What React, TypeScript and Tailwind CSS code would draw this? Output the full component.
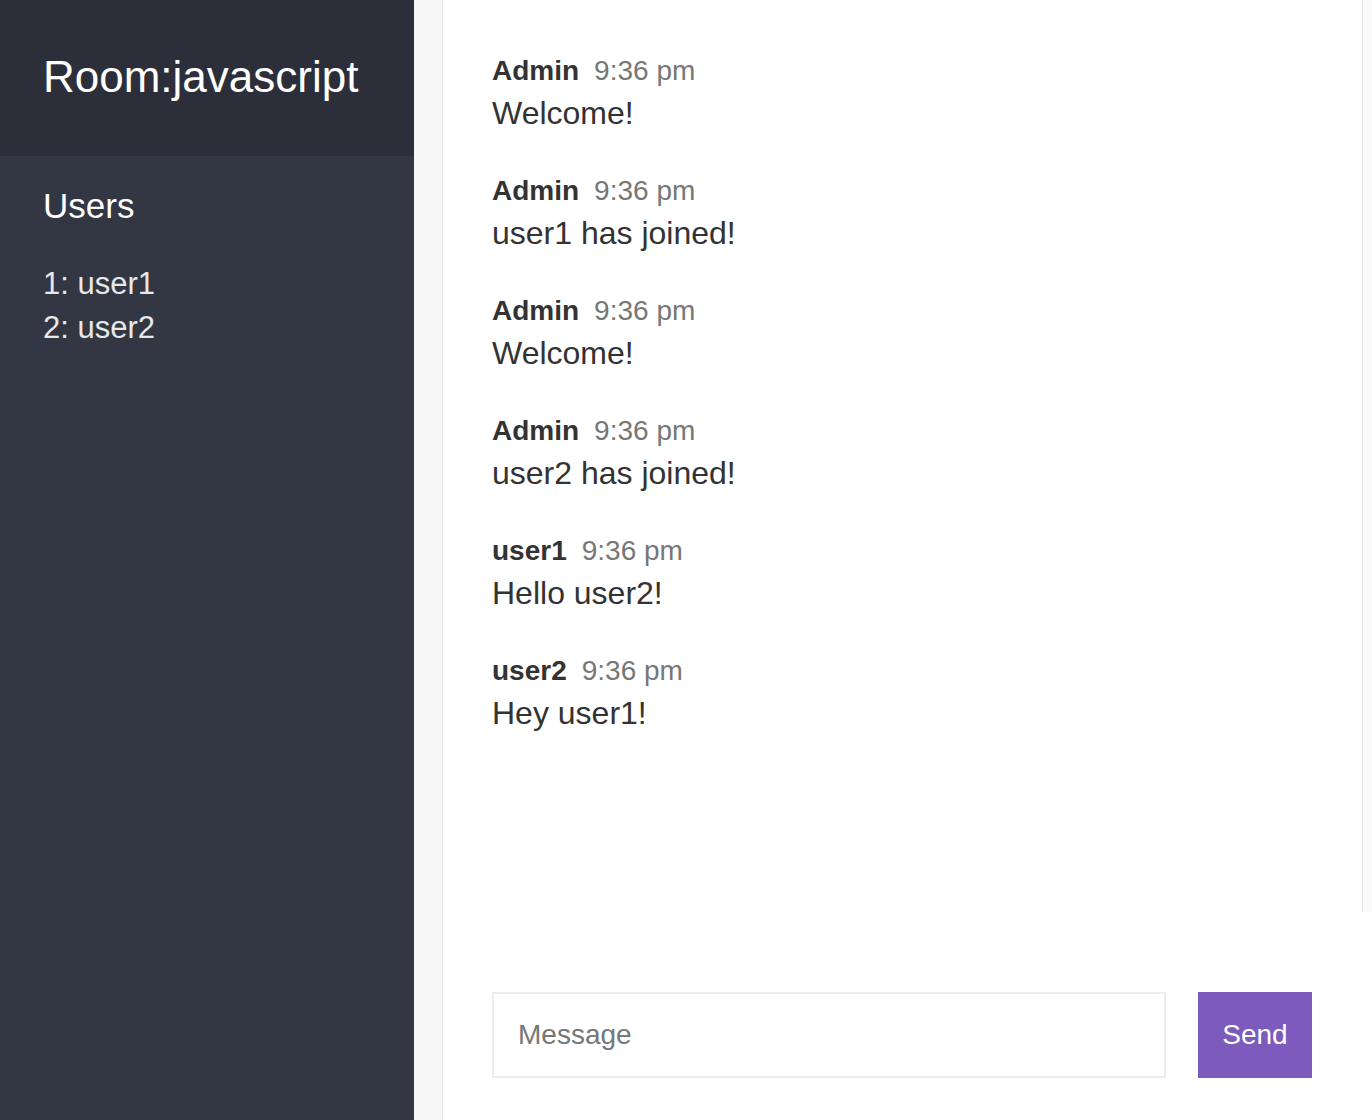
import React from "react";

const users = ["user1", "user2"];

const messages = [
  { from: "Admin", at: "9:36 pm", text: "Welcome!" },
  { from: "Admin", at: "9:36 pm", text: "user1 has joined!" },
  { from: "Admin", at: "9:36 pm", text: "Welcome!" },
  { from: "Admin", at: "9:36 pm", text: "user2 has joined!" },
  { from: "user1", at: "9:36 pm", text: "Hello user2!" },
  { from: "user2", at: "9:36 pm", text: "Hey user1!" },
];

const App = () => {
  return (
    <div className="flex h-[1120px] w-full overflow-hidden bg-white font-['Liberation_Sans',Arial,sans-serif]">
      <aside className="flex w-[414px] shrink-0 flex-col bg-[#333744]">
        <div className="h-[156px] bg-[#2c2f3a] px-[43px] pt-[51px]">
          <h1 className="text-[44px] leading-[1.2] text-white">Room:javascript</h1>
        </div>
        <div className="px-[43px] pt-[29px]">
          <h3 className="text-[35px] leading-[42px] text-white">Users</h3>
          <ol className="mt-[35px] text-[31px] font-light leading-[44px] text-[#e8e8e8]">
            {users.map((u, i) => (
              <li key={u}>
                {i + 1}: {u}
              </li>
            ))}
          </ol>
        </div>
      </aside>

      <div className="w-[29px] shrink-0 border-r border-[#e6e6e6] bg-[#f7f7f7]" />

      <main className="flex flex-1 flex-col">
        <div className="flex flex-1">
          <ol className="flex-1 pl-[49px] pt-[55px]">
            {messages.map((m, i) => (
              <li key={i} className="mb-[43px]">
                <div className="flex text-[28px] leading-[31px]">
                  <span className="mr-[15px] font-bold text-[#333]">{m.from}</span>
                  <span className="text-[#777]">{m.at}</span>
                </div>
                <p className="mt-[8px] text-[32px] leading-[38px] text-[#333]">{m.text}</p>
              </li>
            ))}
          </ol>
          <div className="w-[10px] border-l border-[#e2e2e2] bg-[#fafafa]" />
        </div>

        <div className="flex h-[208px] shrink-0 items-start gap-[32px] pl-[49px] pr-[60px] pt-[80px]">
          <input
            autoFocus
            placeholder="Message"
            className="h-[86px] flex-1 border-2 border-[#ececec] bg-white px-[24px] text-[28px] text-[#333] caret-black outline-none placeholder:text-[#777]"
          />
          <button className="h-[86px] w-[114px] bg-[#7c5bbd] text-[28px] text-white">Send</button>
        </div>
      </main>
    </div>
  );
};

export default App;
